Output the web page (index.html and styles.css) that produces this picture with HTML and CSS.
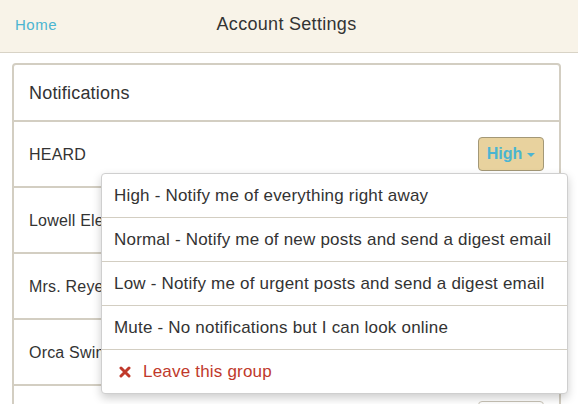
FILE: index.html
```html
<!DOCTYPE html>
<html>
<head>
<meta charset="utf-8">
<link rel="stylesheet" href="styles.css">
</head>
<body>
<header class="topbar">
  <a class="home" href="#">Home</a>
  <h1 class="title">Account Settings</h1>
</header>
<main class="content">
  <section class="panel">
    <div class="panel-head">Notifications</div>
    <div class="row">
      <span class="name">HEARD</span>
      <div class="dd">
        <button class="btn btn-high">High <span class="caret"></span></button>
        <ul class="menu">
          <li>High - Notify me of everything right away</li>
          <li>Normal - Notify me of new posts and send a digest email</li>
          <li>Low - Notify me of urgent posts and send a digest email</li>
          <li>Mute - No notifications but I can look online</li>
          <li class="leave"><svg class="x" viewBox="0 0 12 12" width="12" height="12"><path d="M2 2L10 10M10 2L2 10" stroke="#c0392b" stroke-width="3" stroke-linecap="round"/></svg>Leave this group</li>
        </ul>
      </div>
    </div>
    <div class="row">
      <span class="name">Lowell Elementary</span>
    </div>
    <div class="row">
      <span class="name">Mrs. Reyes' Class</span>
    </div>
    <div class="row">
      <span class="name">Orca Swim Team</span>
    </div>
    <div class="row">
      <span class="name"></span>
      <div class="dd"><button class="btn"></button></div>
    </div>
  </section>
</main>
</body>
</html>
```
FILE: styles.css
```css
html, body {
  margin: 0;
  padding: 0;
  background: #fff;
  font-family: "Liberation Sans", Arial, sans-serif;
  color: #333;
  overflow: hidden;
}
.topbar {
  height: 52px;
  background: #f8f3e8;
  border-bottom: 1px solid #d8d3c6;
  display: flex;
  align-items: center;
  position: relative;
}
.home {
  color: #4bb5d1;
  text-decoration: none;
  font-size: 15px;
  letter-spacing: 0.5px;
  margin-left: 15px;
  margin-top: -3px;
}
.title {
  position: absolute;
  left: 0;
  right: 0;
  text-align: center;
  margin: 0;
  font-size: 18px;
  letter-spacing: 0.3px;
  font-weight: normal;
  color: #333;
  top: 14px;
  padding-right: 5px;
  pointer-events: none;
}
.content {
  padding: 10px 17px 0 12px;
}
.panel {
  border: 2px solid #d3cec2;
  border-radius: 4px;
  background: #fff;
}
.panel-head {
  box-sizing: border-box;
  height: 57px;
  display: flex;
  align-items: center;
  padding-left: 15px;
  padding-top: 1px;
  font-size: 18px;
  letter-spacing: 0.2px;
  border-bottom: 2px solid #d3cec2;
}
.row {
  box-sizing: border-box;
  height: 66px;
  display: flex;
  align-items: center;
  justify-content: space-between;
  padding: 0 15px 0 15px;
  border-bottom: 2px solid #d3cec2;
  font-size: 16px;
  letter-spacing: 0.2px;
}
.name {
  padding-top: 2px;
}
.dd {
  position: relative;
}
.btn {
  width: 66px;
  height: 34px;
  border: 1px solid #c8c3b6;
  border-radius: 4px;
  background: #fff;
  font-family: inherit;
  font-size: 16px;
  font-weight: bold;
  color: #4bb5d1;
  padding: 0;
  display: flex;
  align-items: center;
  justify-content: center;
  gap: 5px;
  letter-spacing: 0;
}
.btn-high {
  background: #e8d29e;
  border-color: #a39877;
}
.caret {
  width: 0;
  height: 0;
  border-left: 4px solid transparent;
  border-right: 4px solid transparent;
  border-top: 4px solid #4bb5d1;
  margin-top: 1px;
}
.menu {
  position: absolute;
  top: calc(100% + 2px);
  right: -24px;
  width: 465px;
  margin: 0;
  padding: 0;
  list-style: none;
  background: #fff;
  border: 1px solid #cfcfcf;
  border-radius: 4px;
  box-shadow: 0 4px 10px rgba(0, 0, 0, 0.2);
  z-index: 10;
}
.menu li {
  display: flex;
  align-items: center;
  padding-left: 12px;
  padding-top: 1px;
  box-sizing: border-box;
  height: 44px;
  font-size: 17px;
  letter-spacing: 0.2px;
  color: #333;
  border-bottom: 1px solid #d3cec2;
  white-space: nowrap;
}
.menu li:last-child {
  border-bottom: none;
  height: 43px;
}
.menu .leave {
  color: #c0392b;
  padding-left: 17px;
}
.x {
  margin-right: 12px;
}
```
